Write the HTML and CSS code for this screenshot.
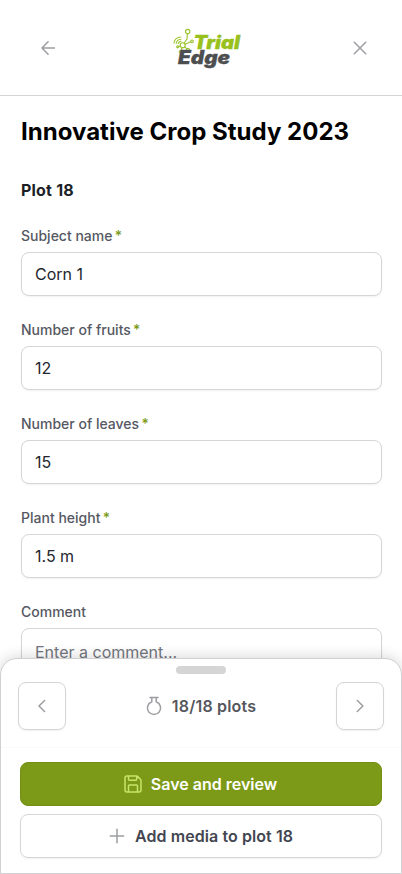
FILE: index.html
```html
<!DOCTYPE html>
<html lang="en">
<head>
<meta charset="utf-8">
<title>Trial Edge</title>
<link rel="stylesheet" href="styles.css">
</head>
<body>
<div class="screen">
  <header class="header">
    <button class="icon-button" aria-label="Back">
      <svg width="24" height="24" viewBox="0 0 24 24"><path d="M18.4 12H6M12.1 5.8 6 12l6.1 6.2"/></svg>
    </button>
    <svg class="logo" width="70" height="44" viewBox="0 0 70 44" role="img" aria-label="Trial Edge">
      <g class="logo-mark">
        <circle cx="14.7" cy="5.6" r="2.2"/><circle cx="9.7" cy="19.2" r="2.5"/><circle cx="19" cy="15.3" r="1.3"/><circle cx="15" cy="23.8" r="1.4"/><circle cx="7.5" cy="25.8" r="1.3"/><circle cx="4.7" cy="20.8" r="1"/>
        <path d="M14.4 7.8 14 13l-2.8 4M12.1 18.2l5.7-2.4M11.8 20.8l2 2M9 21.7l-1 2.8M5.7 20.6l1.6-.6M1 17a7 7 0 0 1 6.7-6M3.2 17.3a5 5 0 0 1 4.6-4.1M5.3 17.5a3 3 0 0 1 2.6-2.1"/>
      </g>
      <text class="logo-trial" x="20.5" y="22.7" textLength="46.5" lengthAdjust="spacingAndGlyphs">Trial</text>
      <text class="logo-edge" x="5" y="38" textLength="52" lengthAdjust="spacingAndGlyphs">Edge</text>
    </svg>
    <button class="icon-button" aria-label="Close">
      <svg width="24" height="24" viewBox="0 0 24 24"><path d="m6.3 6.3 11.4 11.4M17.7 6.3 6.3 17.7"/></svg>
    </button>
  </header>

  <main class="content">
    <h1>Innovative Crop Study 2023</h1>
    <h2>Plot 18</h2>
    <form class="form">
      <label class="field"><span class="label">Subject name <b>*</b></span><input value="Corn 1"></label>
      <label class="field"><span class="label">Number of fruits <b>*</b></span><input value="12"></label>
      <label class="field"><span class="label">Number of leaves <b>*</b></span><input value="15"></label>
      <label class="field"><span class="label">Plant height <b>*</b></span><input value="1.5 m"></label>
      <label class="field"><span class="label">Comment</span><textarea placeholder="Enter a comment..."></textarea></label>
    </form>
  </main>

  <section class="sheet">
    <div class="handle"></div>
    <div class="pager">
      <button class="page-button" aria-label="Previous plot"><svg width="24" height="24" viewBox="0 0 24 24"><path d="m14.6 6.5-5.6 5.5 5.6 5.5"/></svg></button>
      <div class="count">
        <svg width="18" height="20" viewBox="0 0 18 20"><path d="M5 1.5h8M6.8 1.5v4.2a6.6 6.6 0 1 0 4.4 0V1.5"/></svg>
        <span>18/18 plots</span>
      </div>
      <button class="page-button" aria-label="Next plot"><svg width="24" height="24" viewBox="0 0 24 24"><path d="m9.3 6.5 5.6 5.5-5.6 5.5"/></svg></button>
    </div>
    <div class="actions">
      <button class="action primary">
        <svg width="20" height="20" viewBox="0 0 20 20"><path d="M5 2h8.3c.6 0 1 .2 1.4.6l2.7 2.7c.4.4.6.8.6 1.4V16a2 2 0 0 1-2 2H4a2 2 0 0 1-2-2V4a2 2 0 0 1 2-2zM5.5 2v3.2c0 .7.4 1 1 1h6.2c.7 0 1-.3 1-1V2.3M5.5 18v-6c0-.7.4-1 1-1h7c.6 0 1 .3 1 1v6"/></svg>
        <span>Save and review</span>
      </button>
      <button class="action secondary">
        <svg width="20" height="20" viewBox="0 0 20 20"><path d="M10 3.3v13.4M3.3 10h13.4"/></svg>
        <span>Add media to plot 18</span>
      </button>
    </div>
  </section>
</div>
</body>
</html>
```
FILE: styles.css
```css
* { box-sizing: border-box; }
body { margin: 0; background: #fff; font-family: Inter, "Liberation Sans", sans-serif; color: #1c1f26; }
button, input, textarea { font: inherit; margin: 0; }
button { padding: 0; border: 0; background: none; }
svg { display: block; fill: none; stroke: #9c9da1; stroke-width: 1.5; stroke-linecap: round; stroke-linejoin: round; flex: none; }

.screen { position: relative; width: 402px; height: 874px; overflow: hidden; }
.header { display: flex; align-items: center; justify-content: space-between; height: 96px; padding: 0 30px 0 36px; border-bottom: 1px solid #d4d4d6; }
.logo { margin-left: 7px; }
.logo-mark { stroke: #9bc32e; stroke-width: 1.15; }
.logo text { stroke-width: .3; font-weight: 900; font-style: italic; font-size: 18.5px; }
.logo .logo-trial { fill: #98c11d; stroke: #98c11d; }
.logo .logo-edge { fill: #4d4e50; stroke: #4d4e50; }

.content { padding: 20px 20px 0 21px; }
h1 { margin: 0; font-size: 24px; line-height: 32px; font-weight: 700; color: #000; white-space: nowrap; letter-spacing: .02px; }
h2 { margin: 30px 0 0; font-size: 16px; line-height: 24px; font-weight: 700; letter-spacing: .2px; }
.form { display: flex; flex-direction: column; gap: 24px; margin-top: 24px; }
.field { display: flex; flex-direction: column; gap: 6px; }
.label { font-size: 14px; line-height: 20px; font-weight: 500; color: #555862; }
.label b { margin-left: -1.5px; font-weight: 500; color: #7c9b18; }
input, textarea { display: block; width: 100%; height: 44px; padding: 0 13px; border: 1px solid #d5d6d8; border-radius: 8px; background: #fff; font-size: 16px; line-height: 24px; color: #23262d; box-shadow: 0 1px 2px rgba(16, 24, 40, .06); outline: 0; }
textarea { height: 100px; padding: 11px 13px; resize: none; }
textarea::placeholder { color: #73767e; opacity: 1; }

.sheet { position: absolute; left: 0; right: 0; bottom: 0; height: 216px; border: 1px solid #d0d0d2; border-radius: 17px 17px 0 0; background: #fff; box-shadow: 0 -2px 14px rgba(0, 0, 0, .14); }
.handle { width: 50px; height: 8px; margin: 7px auto 0; border-radius: 4px; background: #d5d5d5; }
.pager { display: flex; align-items: center; justify-content: space-between; height: 74px; padding: 0 17px 10px; border-bottom: 1px solid #fafafa; }
.page-button { display: grid; place-items: center; width: 48px; height: 48px; border: 1px solid #d3d4d6; border-radius: 8px; box-shadow: 0 1px 2px rgba(16, 24, 40, .06); }
.count { display: flex; align-items: center; gap: 9px; padding-right: 1px; font-size: 16px; line-height: 24px; font-weight: 600; letter-spacing: .18px; color: #55575d; }
.actions { display: flex; flex-direction: column; gap: 8px; padding: 14px 19px 0; }
.action { display: flex; align-items: center; justify-content: center; gap: 8px; height: 44px; border: 1px solid #d5d6d9; border-radius: 8px; font-size: 16px; font-weight: 600; color: #434651; box-shadow: 0 1px 2px rgba(16, 24, 40, .06); }
.primary { padding-right: 2px; border-color: #719014; background: #7c9a18; color: #fff; box-shadow: inset 0 -1px 0 #789617; }
.secondary { padding-right: 2px; letter-spacing: .08px; }
.primary svg { stroke: #c6e66a; }
```
